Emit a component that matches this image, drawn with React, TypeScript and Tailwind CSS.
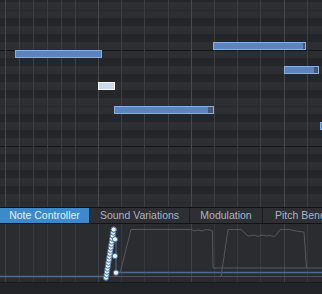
import React from 'react';

type Row = { black: boolean; octave?: boolean; split?: boolean };

// piano rows from the top, 8px each, first one is cut off by 6px
const rows: Row[] = [
  { black: true },
  { black: false },
  { black: false, split: true },
  { black: true },
  { black: false },
  { black: true },
  { black: false },
  { black: false, octave: true },
  { black: true },
  { black: false },
  { black: true },
  { black: false },
  { black: true },
  { black: false },
  { black: false, split: true },
  { black: true },
  { black: false },
  { black: true },
  { black: false },
  { black: false, octave: true },
  { black: true },
  { black: false },
  { black: true },
  { black: false },
  { black: true },
  { black: false },
  { black: false, split: true },
];

// widths of the spaces between vertical grid lines
const cols = [
  { w: 'w-[14px]', bar: true },
  { w: 'w-[14px]', bar: false },
  { w: 'w-[14px]', bar: false },
  { w: 'w-[14px]', bar: false },
  { w: 'w-[14px]', bar: false },
  { w: 'w-[23px]', bar: false },
  { w: 'w-[23px]', bar: true },
  { w: 'w-[23px]', bar: false },
  { w: 'w-[24px]', bar: false },
  { w: 'w-[23px]', bar: false },
  { w: 'w-[23px]', bar: true },
  { w: 'w-[23px]', bar: false },
  { w: 'w-[23px]', bar: false },
  { w: 'w-[24px]', bar: false },
  { w: 'w-[23px]', bar: true },
  { w: 'w-[15px]', bar: false },
];

const GridCols = ({ dim }: { dim?: boolean }) => (
  <div className="absolute inset-0 flex pointer-events-none">
    <div className="w-[5px] shrink-0" />
    {cols.map((c, i) => (
      <div
        key={i}
        className={`${c.w} shrink-0 border-l ${
          c.bar
            ? dim
              ? 'border-[#404247]'
              : 'border-[#47494e]'
            : dim
              ? 'border-[#36383c]'
              : 'border-[#3b3d42]'
        }`}
      />
    ))}
  </div>
);

const notes = [
  { pos: 'left-[15px] top-[50px] w-[87px]', cap: '' },
  { pos: 'left-[114px] top-[106px] w-[100px]', cap: 'w-[5px]' },
  { pos: 'left-[213px] top-[42px] w-[93px]', cap: 'w-[2px]' },
  { pos: 'left-[284px] top-[66px] w-[35px]', cap: 'w-[4px]' },
  { pos: 'left-[320px] top-[122px] w-[10px]', cap: '' },
];

const PianoRoll = () => (
  <div className="relative h-[207px] shrink-0 overflow-hidden">
    <div className="flex flex-col -mt-[6px]">
      {rows.map((r, i) => (
        <div
          key={i}
          className={`h-[8px] shrink-0 ${r.black ? 'bg-[#25262a]' : 'bg-[#2c2e32]'} ${
            r.octave ? 'border-t border-[#131416]' : r.split ? 'border-t border-[#27282c]' : ''
          }`}
        />
      ))}
    </div>
    <GridCols />
    {notes.map((n, i) => (
      <div
        key={i}
        className={`absolute h-[8px] ${n.pos} bg-[#5a85c3] border border-[#86afe2] flex justify-end`}
      >
        {n.cap && <div className={`${n.cap} h-full bg-[#4b586c]`} />}
      </div>
    ))}
    <div className="absolute left-[98px] top-[82px] w-[17px] h-[8px] bg-[#cbd9ea] border border-[#f4f7fb]" />
  </div>
);

const tabs = [
  { label: 'Note Controller', w: 'w-[89px]', active: true },
  { label: 'Sound Variations', w: 'w-[100px]', active: false },
  { label: 'Modulation', w: 'w-[73px]', active: false },
  { label: 'Pitch Bend', w: 'w-[70px]', active: false },
];

const TabBar = () => (
  <div className="h-[17px] shrink-0 flex border-y border-[#121315] bg-[#2d2f33] overflow-hidden">
    {tabs.map((t, i) => (
      <div
        key={i}
        className={`${t.w} shrink-0 flex items-center ${
          i === 3 ? 'justify-start pl-[12px]' : 'justify-center'
        } whitespace-nowrap text-[10.5px] leading-none ${
          t.active ? 'bg-[#3b8bcc] text-[#e6edf5]' : 'text-[#a7b5c6]'
        } ${i > 0 ? 'border-l border-[#1b1c1f]' : ''}`}
      >
        {t.label}
      </div>
    ))}
  </div>
);

const dotsColumn = Array.from({ length: 17 }, (_, i) => ({
  x: 106 + (113.7 - 106) * (i / 16),
  y: 53.7 - (53.7 - 5.6) * (i / 16),
}));

const Lane = () => (
  <div className="relative h-[58px] shrink-0 bg-[#2a2c30] overflow-hidden">
    <GridCols dim />
    <svg className="absolute inset-0" width={322} height={58} viewBox="0 0 322 58">
      <line x1={0} y1={52.5} x2={106} y2={52.5} stroke="#4a6c93" strokeWidth={1.5} />
      <line x1={106} y1={52.5} x2={322} y2={52.5} stroke="#4f5257" strokeWidth={1} />
      <line x1={116} y1={48.5} x2={322} y2={48.5} stroke="#4a6c93" strokeWidth={1.5} />
      <polyline
        fill="none"
        stroke="#55585e"
        strokeWidth={1}
        points="120,49 131,5.5 192,5.5 194,7 198,6 202,7 206,5.5 210,6 212.5,7 213,44 322,44"
      />
      <polyline
        fill="none"
        stroke="#55585e"
        strokeWidth={1}
        points="221,53 228,5.5 241,5.5 248,12 254,11 258,12.5 262,11 266,12 270,11.5 274,12.5 277,10 280,5.5 289,5.5 296,7 304,8 306.5,44"
      />
      <line x1={116} y1={16} x2={116} y2={48.5} stroke="#4a6c93" strokeWidth={1} />
      {dotsColumn.map((d, i) => (
        <circle key={i} cx={d.x} cy={d.y} r={2.6} fill="#eef3f8" stroke="#3d6da6" strokeWidth={1} />
      ))}
      <circle cx={115} cy={15.3} r={2.6} fill="#eef3f8" stroke="#3d6da6" strokeWidth={1} />
      <circle cx={115} cy={32} r={2.6} fill="#eef3f8" stroke="#3d6da6" strokeWidth={1} />
      <circle cx={116} cy={48.7} r={2.6} fill="#eef3f8" stroke="#3d6da6" strokeWidth={1} />
      <circle cx={113.7} cy={5.5} r={2.6} fill="#eef3f8" stroke="#3d6da6" strokeWidth={1} />
    </svg>
  </div>
);

export default function App() {
  return (
    <div className="w-[322px] h-[294px] flex flex-col overflow-hidden bg-[#2b2d31] font-['Liberation_Sans',Arial,sans-serif]">
      <PianoRoll />
      <TabBar />
      <Lane />
      <div className="flex-1 border-t border-[#18191b] bg-[#232427]" />
    </div>
  );
}
